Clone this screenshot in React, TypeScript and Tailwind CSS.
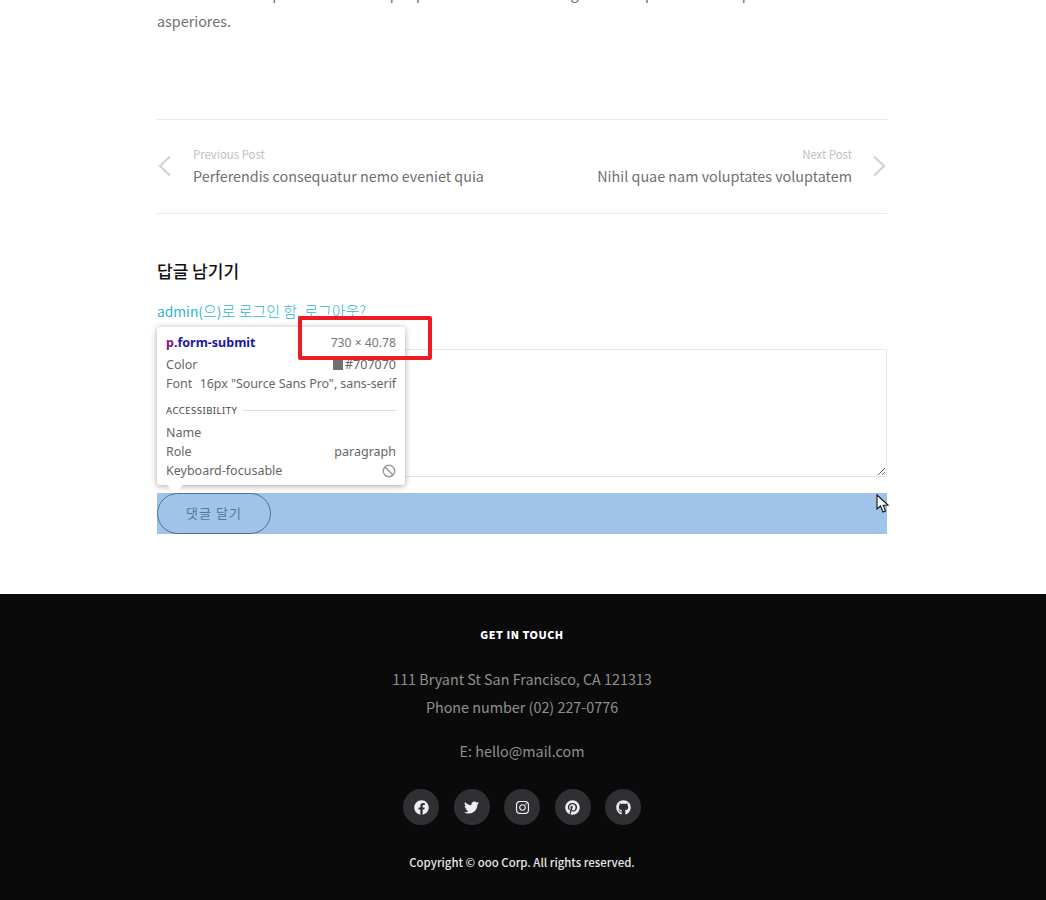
import React from 'react';
import { FaFacebook, FaGithub, FaInstagram, FaPinterest, FaTwitter } from 'react-icons/fa';

const SOCIALS = [FaFacebook, FaTwitter, FaInstagram, FaPinterest, FaGithub];

const Chevron: React.FC<{ flip?: boolean }> = ({ flip }) => (
  <svg width="14" height="22" viewBox="0 0 14 22" fill="none" stroke="#d2d2d2" strokeWidth="2.2" className={flip ? 'shrink-0 mb-[2px] mr-[1px]' : 'shrink-0 mb-[2px]'}>
    <path d={flip ? 'M2 1.5 L12 11 L2 20.5' : 'M12 1.5 L2 11 L12 20.5'} />
  </svg>
);

const Tooltip: React.FC = () => (
  <div className="absolute left-0 top-[-22px] w-[248px] h-[158px] bg-white rounded-[3px] shadow-[0_1px_6px_rgba(0,0,0,0.35)] px-[9px] pt-[6px] font-['Noto_Sans',sans-serif] text-[12.5px] leading-[19px] text-[#666]">
    <div className="flex justify-between">
      <span className="font-bold"><span className="text-[#881280]">p</span><span className="text-[#1a1aa6]">.form-submit</span></span>
      <span className="text-[12.2px] text-[#777]">730 × 40.78</span>
    </div>
    <div className="flex justify-between mt-[3px]">
      <span>Color</span>
      <span className="flex items-center gap-[2px]"><span className="w-[10px] h-[10px] bg-[#707070]"></span>#707070</span>
    </div>
    <div className="flex justify-between">
      <span>Font</span>
      <span className="whitespace-nowrap tracking-[-0.08px]">16px "Source Sans Pro", sans-serif</span>
    </div>
    <div className="flex items-center gap-[6px] mt-[8px] text-[9.5px] tracking-[0.5px] text-[#444]">
      <span>ACCESSIBILITY</span>
      <span className="flex-1 h-px bg-[#ddd]"></span>
    </div>
    <div className="mt-[3px]">Name</div>
    <div className="flex justify-between">
      <span>Role</span>
      <span>paragraph</span>
    </div>
    <div className="flex justify-between items-center">
      <span>Keyboard-focusable</span>
      <svg width="14" height="14" viewBox="0 0 14 14" fill="none" stroke="#999" strokeWidth="1.4">
        <circle cx="7" cy="7" r="5.8" />
        <path d="M3 3 L11 11" />
      </svg>
    </div>
    <div className="absolute left-[10px] bottom-[-8px] w-0 h-0 border-x-[8px] border-x-transparent border-t-[8px] border-t-white"></div>
  </div>
);

const Cursor: React.FC = () => (
  <svg width="14" height="20" viewBox="0 0 14 20" className="absolute right-[-3px] top-[1px]">
    <path d="M1 1 L1 15 L4.5 12 L7 18 L9.5 17 L7.2 11.2 L12 11 Z" fill="#fff" stroke="#111" strokeWidth="1.1" />
  </svg>
);

export default function App() {
  return (
    <div className="w-[1046px] h-[900px] overflow-hidden bg-white font-['Noto_Sans_CJK_KR',sans-serif] text-[14.35px] text-[#707070]">
      <main className="w-[730px] ml-[157px] h-[615px] -mt-[21px]">
        <p className="leading-[28px] whitespace-nowrap">
          Nemo et aut rem pariatur et rerum pro perferendis dolores magni alias et possimus rem pariatur et debitis
          <br />
          asperiores.
        </p>

        <nav className="flex justify-between items-center h-[95px] mt-[84px] border-y border-[#e9e9e9]">
          <a className="flex items-center gap-[21px] pl-[1px]">
            <Chevron />
            <div>
              <div className="text-[11.4px] leading-[18px] text-[#c0c0c0]">Previous Post</div>
              <div className="leading-[26px]">Perferendis consequatur nemo eveniet quia</div>
            </div>
          </a>
          <a className="flex items-center gap-[20px] text-right">
            <div>
              <div className="text-[11.4px] leading-[18px] text-[#c0c0c0]">Next Post</div>
              <div className="leading-[26px]">Nihil quae nam voluptates voluptatem</div>
            </div>
            <Chevron flip />
          </a>
        </nav>

        <h3 className="mt-[44px] text-[17px] leading-[26px] font-medium text-[#111]">답글 남기기</h3>
        <p className="mt-[14px] text-[15px] leading-[26px] font-light text-[#2eb3d6]">
          <span className="text-[13.8px] font-normal">admin(</span>으<span className="text-[13.8px] font-normal">)</span>로 로그인 함. 로그아웃?
        </p>

        <form className="relative mt-[25px]">
          <textarea className="block w-full h-[128px] border border-[#e6e6e6] bg-white outline-none"></textarea>
          <Tooltip />
          <div className="absolute left-[141px] top-[-33px] w-[134px] h-[44px] border-4 border-[#ed1c24] rounded-[2px]"></div>
          <div className="relative mt-[16px] h-[41px] bg-[#9fc4e8]">
            <button type="button" className="w-[114px] h-[41px] pb-[2px] rounded-full border border-[#4a6f9c] text-[13px] tracking-[1px] text-[#5a7598]">
              댓글 달기
            </button>
            <Cursor />
          </div>
        </form>
      </main>

      <footer className="h-[306px] bg-[#0a0a0b] pr-[2px] pt-[31px] text-center text-[#8f8f8f]">
        <h4 className="text-[10.8px] leading-[18px] font-black tracking-[0.5px] text-white">GET IN TOUCH</h4>
        <p className="mt-[22px] leading-[28px]">111 Bryant St San Francisco, CA 121313</p>
        <p className="leading-[28px]">Phone number (02) 227-0776</p>
        <p className="mt-[16px] leading-[28px]">E: hello@mail.com</p>
        <div className="flex justify-center gap-[14.5px] mt-[24px]">
          {SOCIALS.map((Icon, i) => (
            <a key={i} className="flex items-center justify-center w-[36px] h-[36px] rounded-full bg-[#2f3033] text-[#eeeeee]">
              <Icon size={15} />
            </a>
          ))}
        </div>
        <p className="mt-[27px] text-[11.4px] leading-[20px] font-medium text-[#e6e6e6]">Copyright © ooo Corp. All rights reserved.</p>
      </footer>
    </div>
  );
}
